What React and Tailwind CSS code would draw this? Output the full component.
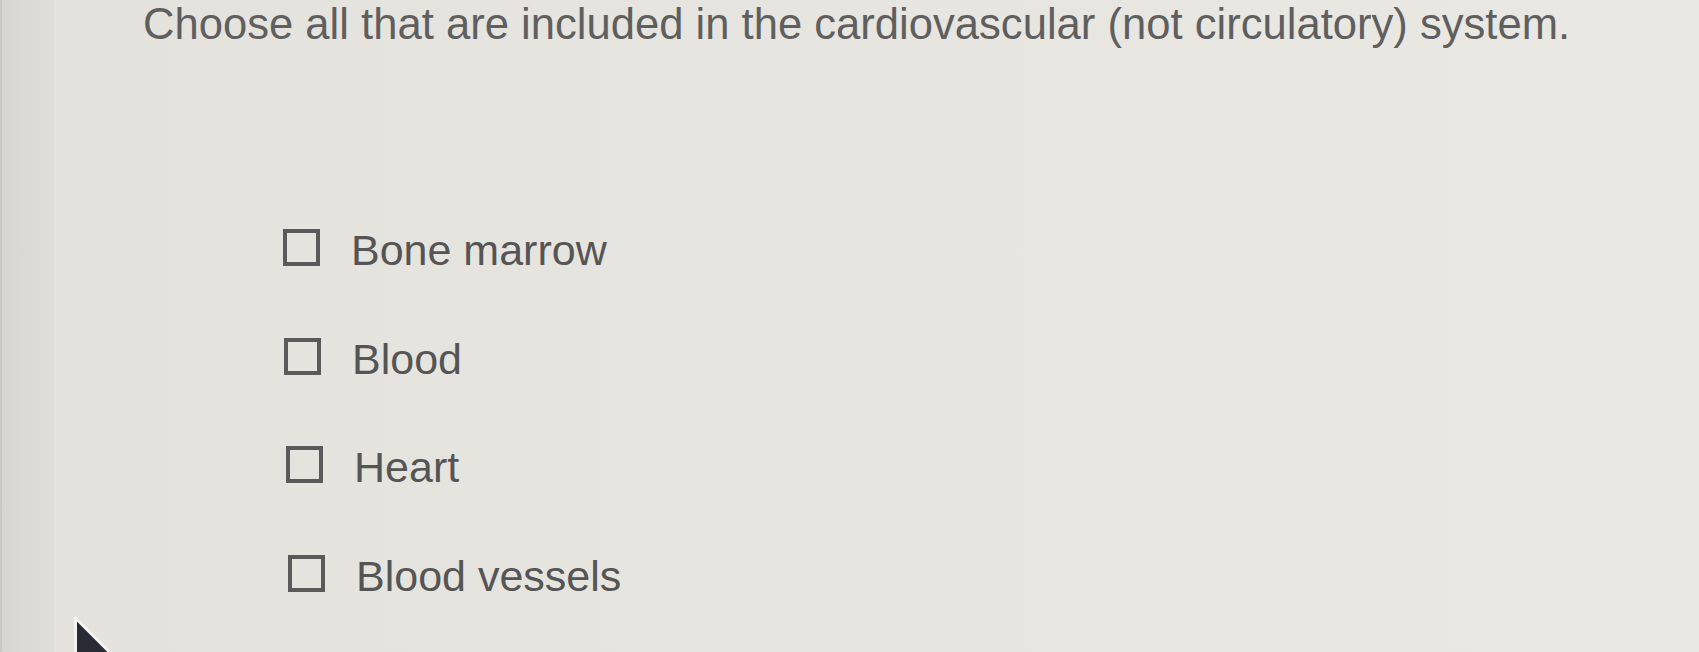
import React from 'react';

const options = [
  { label: 'Bone marrow', shift: 'ml-0' },
  { label: 'Blood', shift: 'ml-[1px]' },
  { label: 'Heart', shift: 'ml-[3px]' },
  { label: 'Blood vessels', shift: 'ml-[5px]' },
];

// mouse pointer caught in the photo, bottom-left
function Cursor() {
  return (
    <svg
      className="absolute left-[69px] top-[612px]"
      width="46"
      height="66"
      viewBox="0 0 30 44"
    >
      <path
        d="M4 4 L4 38 L12 30 L18 43 L23 41 L17 28 L28 28 Z"
        fill="#2b2b36"
        stroke="#f4f4f2"
        strokeWidth="2"
        strokeLinejoin="round"
      />
    </svg>
  );
}

export default function App() {
  return (
    <div className="relative flex w-full h-[652px] overflow-hidden bg-linear-to-r from-[#e4e2dc] to-[#eae8e3] font-['Liberation_Sans',Arial,sans-serif]">
      {/* monitor bezel edge on the left */}
      <div className="w-[54px] shrink-0 bg-linear-to-r from-[#d6d5d1] to-[#dfdeda] border-l-2 border-[#c9c8c4]" />

      <div className="flex flex-col pl-[89px]">
        <h1 className="text-[43.6px] leading-[48px] text-[#5f5f5f] font-normal whitespace-nowrap">
          Choose all that are included in the cardiovascular (not circulatory) system.
        </h1>

        <ul className="flex flex-col gap-[63.5px] mt-[180px] ml-[140px]">
          {options.map((o) => (
            <li key={o.label} className={`flex flex-row items-start gap-[31px] ${o.shift}`}>
              <span className="mt-[1px] w-[37px] h-[37px] border-[4px] border-[#5a5a5a] shrink-0" />
              <span className="text-[43px] leading-[45px] text-[#555555]">{o.label}</span>
            </li>
          ))}
        </ul>
      </div>

      <Cursor />
    </div>
  );
}
